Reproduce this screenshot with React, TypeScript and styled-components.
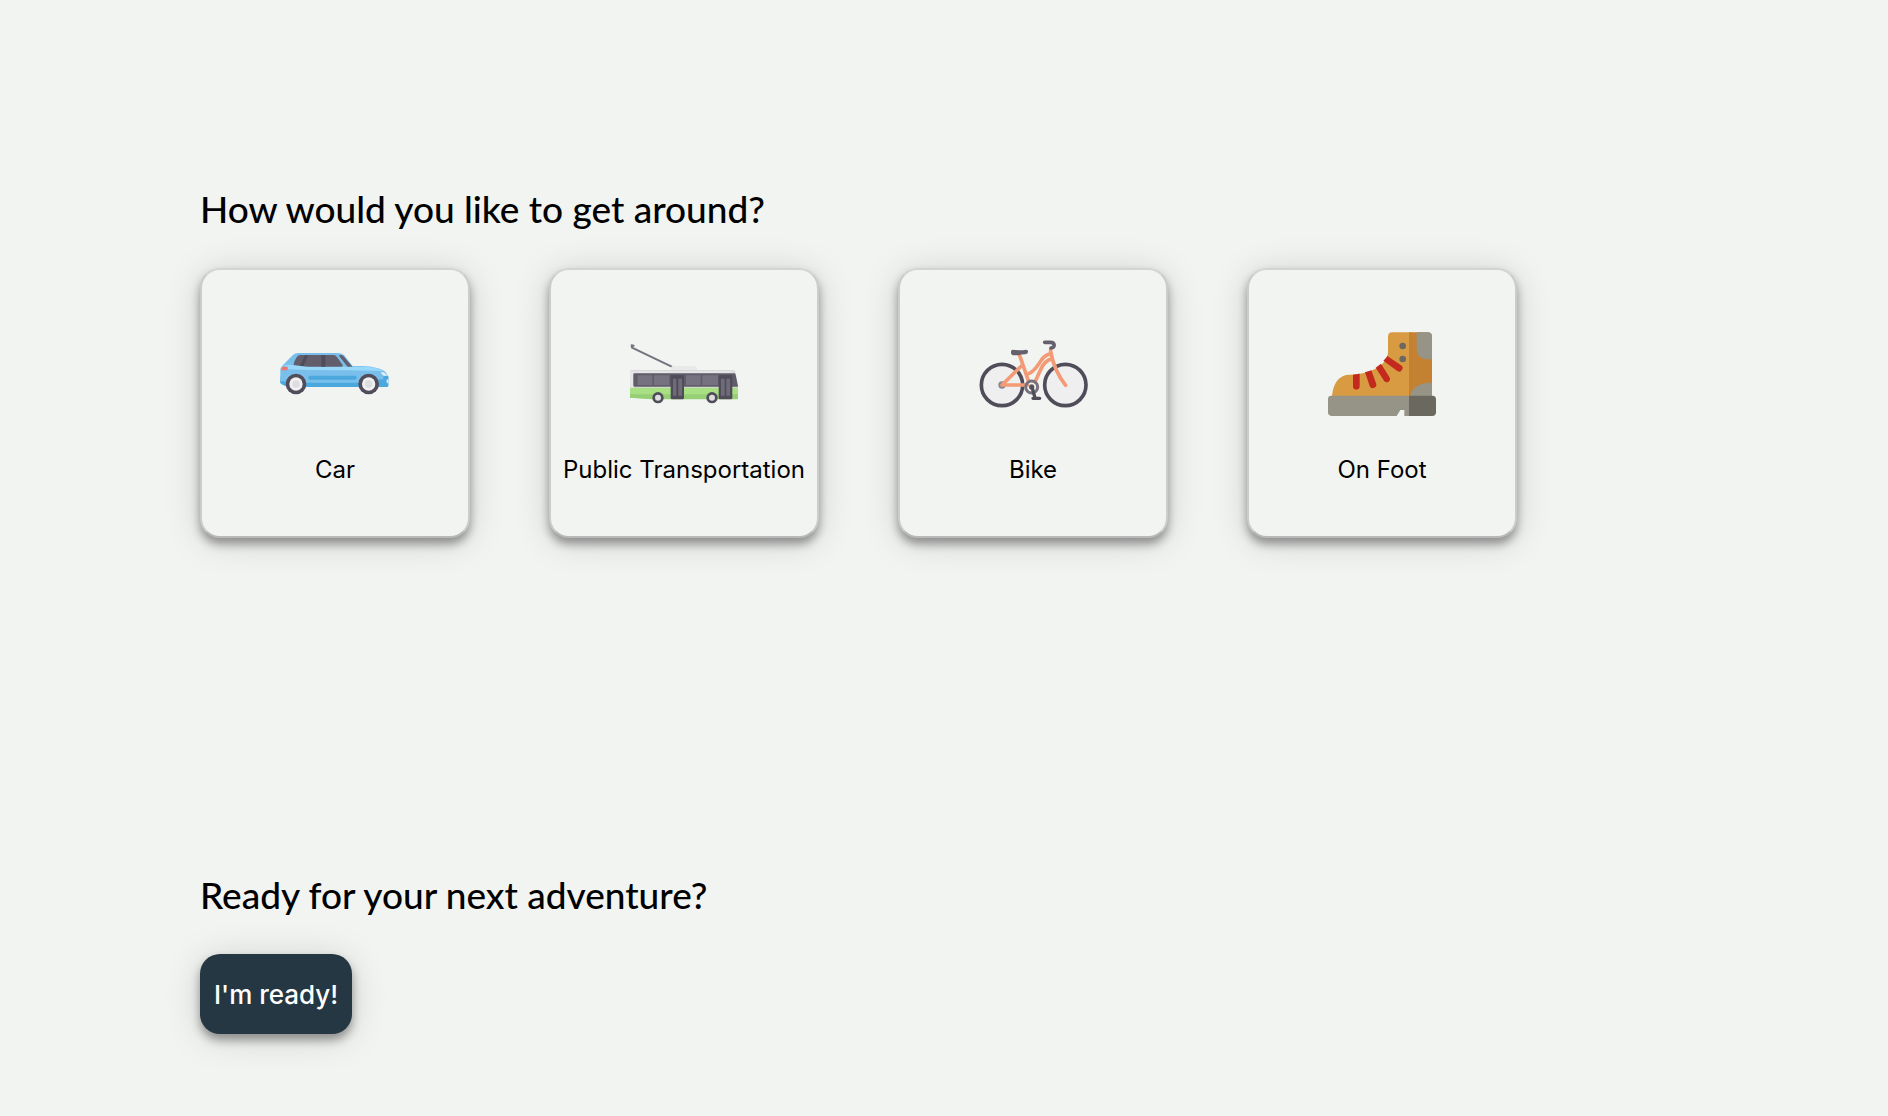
import React from "react";
import styled, { createGlobalStyle } from "styled-components";

const GlobalStyle = createGlobalStyle`
  *, *::before, *::after { box-sizing: border-box; }
  body {
    margin: 0;
    background: #f2f4f1;
    color: #000;
    font-family: Inter, "Liberation Sans", sans-serif;
  }
`;

const elevation = "0 6px 10px rgba(0, 0, 0, 0.36), 0 4px 36px rgba(0, 0, 0, 0.15)";

const Page = styled.main`
  display: flex;
  flex-direction: column;
  gap: 335px;
  padding: 187px 200px 82px;
`;

const Section = styled.section`
  display: flex;
  flex-direction: column;
  align-items: flex-start;
  gap: 37px;
`;

const Heading = styled.h2`
  margin: 0;
  font-family: Lato, "Liberation Sans", sans-serif;
  font-size: 37px;
  font-weight: 500;
  line-height: 44px;
`;

const Options = styled.div`
  display: flex;
  flex-wrap: wrap;
  gap: 79px;
`;

const Card = styled.button`
  display: flex;
  flex-direction: column;
  align-items: center;
  justify-content: center;
  gap: 27px;
  width: 270px;
  height: 270px;
  padding: 0 0 2px;
  border: 2px solid;
  border-color: #d4d5d3 #cbcccb #b8b9b8;
  border-radius: 20px;
  background: #f2f4f1;
  box-shadow: ${elevation};
  color: inherit;
  font: inherit;
  font-size: 24px;
  line-height: 30px;
  white-space: nowrap;
  cursor: pointer;
`;

const Icon = styled.svg`
  display: block;
  width: 108px;
  height: 108px;
`;

const ReadyButton = styled.button`
  height: 80px;
  padding: 0 14px;
  border: 0;
  border-radius: 20px;
  background: #243742;
  box-shadow: ${elevation};
  color: #fff;
  font: inherit;
  font-size: 26px;
  font-weight: 500;
  cursor: pointer;
`;

const CarWheel = ({ cx }: { cx: number }) => (
  <g>
    <circle cx={cx} cy="132" r="31" fill="#514c5a" />
    <circle cx={cx} cy="132" r="20" fill="#f0eff1" />
    <circle cx={cx} cy="132" r="11" fill="#dddcdf" />
  </g>
);

const CarIcon = () => (
  <Icon viewBox="32 -60 324 324" overflow="visible" aria-hidden="true">
    <path fill="#7abeec" d="M30 92Q30 82 38 75L67 46Q74 39 84 39H202Q214 39 221 45L247 78H275C308 79 337 86 346 97L354 110V137Q354 141 350 141H60L30 129Z" />
    <path fill="#98d8fa" d="M35 78Q48 73 66 75L110 80H275C304 80 330 86 341 93Q205 90 111 90L53 88V80Z" />
    <path fill="#635e6c" d="M90 45H190Q196 45 200 51L217 75Q218 80 213 80H115Q92 79 70 75Q69 69 79 52Q83 45 90 45Z" />
    <path fill="#514c5a" d="M104 46H114L99 78L89 77ZM153 45H165V80H153Z" />
    <path fill="#635e6c" d="M206 45H212Q216 45 219 48L246 80H234Q231 80 229 77L207 49Z" />
    <path fill="#4ba8dc" d="M30 118H354V136Q354 141 349 141H60Q38 138 30 129Z" />
    <path fill="#7abeec" d="M48 107H325V128H108V132H46V124H30V107Z" />
    <rect x="114" y="107" width="145" height="12" rx="5" fill="#4ba8dc" />
    <path fill="#4ba8dc" d="M343 108H354V118H343Q338 117 338 113Q338 109 343 108Z" />
    <path fill="#e7eef1" d="M332 96Q343 94 350 107H340Q333 104 332 96ZM354 117V131Q349 130 348 124Q349 118 354 117Z" />
    <path fill="#ee746f" d="M38 80H47Q53 81 52 87Q51 91 46 91H33Q33 84 38 80Z" />
    <CarWheel cx={77} />
    <CarWheel cx={295} />
  </Icon>
);

const BusWheel = ({ cx }: { cx: number }) => (
  <g>
    <circle cx={cx} cy="188" r="17" fill="#514c5a" />
    <circle cx={cx} cy="188" r="9" fill="#dddcdf" />
  </g>
);

const BusIcon = () => (
  <Icon viewBox="30 -45 324 324" aria-hidden="true">
    <path fill="none" stroke="#77727f" strokeWidth="6" strokeLinecap="round" strokeLinejoin="round" d="M41 32L35 31L36 38L155 95" />
    <path fill="#e9e9e9" d="M153 105V97Q154 93 162 93H221Q231 93 232 105Z" />
    <path fill="#d8d8db" d="M34 105H338Q345 105 346 111L354 153V160H30V109Q30 105 34 105Z" />
    <path fill="#e5e5e8" d="M30 108V160H42V115H338V108Z" />
    <path fill="#a8e083" d="M30 158H354V192H100L30 188Z" />
    <path fill="#96cf75" d="M30 178H354V189Q354 193 350 193H95L30 188Z" />
    <path fill="#615c69" d="M43 115H342Q346 115 347 119L354 153V155H43Q40 155 40 151V119Q40 115 43 115Z" />
    <path fill="#777280" d="M53 121H97V150H53ZM102 121H148V150H102ZM198 121H242V150H198ZM247 121H294V150H247Z" />
    <path fill="#514c5a" d="M156 120H189Q192 120 192 124V189Q192 193 188 193H156Q152 193 152 189V124Q152 120 156 120ZM300 120H334Q337 120 337 124V189Q337 193 333 193H300Q296 193 296 189V124Q296 120 300 120Z" />
    <path fill="#706b78" d="M159 131H169V182H159ZM175 131H186V182H175ZM303 131H314V182H303ZM319 131H330V182H319Z" />
    <BusWheel cx={114} />
    <BusWheel cx={276} />
  </Icon>
);

const BikeIcon = () => (
  <Icon viewBox="28 -30 324 324" overflow="visible" aria-hidden="true">
    <g fill="none" strokeLinecap="round" strokeLinejoin="round">
      <g fill="#eeefee" stroke="#514c5a" strokeWidth="11">
        <circle cx="97" cy="165" r="62" />
        <circle cx="287" cy="165" r="62" />
      </g>
      <circle cx="97" cy="165" r="11" fill="#8a8690" />
      <g stroke="#f29b76" strokeWidth="11">
        <path d="M150 76L176 152M158 105L97 165H174" />
        <path d="M243 58V65C249 98 260 131 288 166" />
        <path d="M244 71C231 73 222 80 214 92C203 108 194 124 177 131" />
        <path d="M248 86C229 90 219 103 211 123L196 156" />
      </g>
      <circle cx="186" cy="171" r="18" stroke="#77727e" strokeWidth="9" />
      <circle cx="186" cy="171" r="8" fill="#615c69" />
      <path d="M187 172L196 203M190 205H210" stroke="#514c5a" strokeWidth="10" />
      <path d="M225 37H242C256 37 258 53 244 54" stroke="#65606d" strokeWidth="11" />
    </g>
    <path fill="#65606d" d="M129 59Q150 62 169 59Q176 59 175 66Q174 73 166 73Q154 73 146 76H130Q124 75 124 69V65Q124 59 129 59Z" />
  </Icon>
);

const BootIcon = () => (
  <Icon viewBox="39 0 324 324" aria-hidden="true">
    <path fill="#d99b42" d="M51 228C55 187 74 164 103 164C171 163 219 134 219 94V50Q219 37 232 37H290V228Z" />
    <path fill="#c48132" d="M282 37H338Q351 37 351 50V228H282Z" />
    <path fill="#969486" d="M305 37H338Q351 37 351 50V118H333Q305 114 305 88ZM286 228C291 202 314 187 351 188V228Z" />
    <path fill="#969486" d="M49 227H283V288H268V270H256L245 288H49Q39 287 39 277V237Q39 227 49 227Z" />
    <path fill="#6b6860" d="M282 227H353Q363 228 363 238V277Q363 288 352 288H282Z" />
    <circle cx="263" cy="78" r="10" fill="#6b6860" />
    <circle cx="263" cy="117" r="10" fill="#6b6860" />
    <path fill="#c3291d" d="M114 164L134 161V199A10 10 0 0 1 114 199ZM150 157L169 151L183 190A10 10 0 0 1 164 198ZM182 143L198 131L223 171A10 10 0 0 1 208 184ZM205 122Q213 115 217 108L258 136A10 10 0 0 1 247 153Z" />
  </Icon>
);

const modes = [
  { label: "Car", Picture: CarIcon },
  { label: "Public Transportation", Picture: BusIcon },
  { label: "Bike", Picture: BikeIcon },
  { label: "On Foot", Picture: BootIcon },
];

export default function App() {
  return (
    <>
      <GlobalStyle />
      <Page>
        <Section>
          <Heading>How would you like to get around?</Heading>
          <Options>
            {modes.map(({ label, Picture }) => (
              <Card key={label} type="button">
                <Picture />
                <span>{label}</span>
              </Card>
            ))}
          </Options>
        </Section>
        <Section>
          <Heading>Ready for your next adventure?</Heading>
          <ReadyButton type="button">I'm ready!</ReadyButton>
        </Section>
      </Page>
    </>
  );
}
